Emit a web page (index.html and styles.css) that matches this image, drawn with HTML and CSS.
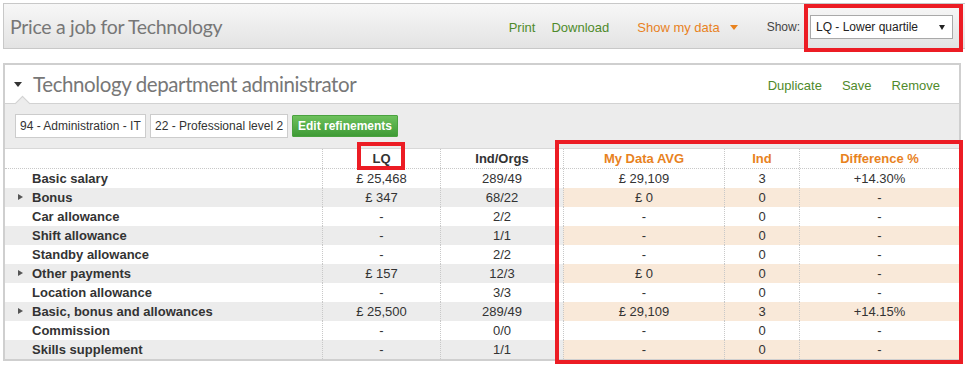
FILE: index.html
```html
<!DOCTYPE html>
<html>
<head>
<meta charset="utf-8">
<title>Price a job for Technology</title>
<link rel="stylesheet" href="styles.css">
</head>
<body>
<div class="topbar">
  <h1 class="page-title">Price a job for Technology</h1>
  <nav class="top-actions">
    <a class="link green print">Print</a>
    <a class="link green download">Download</a>
    <a class="link orange showdata">Show my data</a><span class="caret"></span>
    <span class="show-label">Show:</span>
    <div class="select"><span>LQ - Lower quartile</span><span class="sel-arrow"></span></div>
  </nav>
</div>

<section class="panel">
  <header class="panel-head">
    <span class="collapse-tri"></span>
    <h2 class="job-title">Technology department administrator</h2>
    <div class="panel-actions">
      <a class="link green">Duplicate</a>
      <a class="link green">Save</a>
      <a class="link green">Remove</a>
    </div>
  </header>
  <div class="refine">
    <div class="chip chip-a">94 - Administration - IT</div>
    <div class="chip chip-b">22 - Professional level 2</div>
    <button class="btn-edit">Edit refinements</button>
  </div>

  <div class="grid">
    <div class="row head">
      <div class="c lbl"></div>
      <div class="c">LQ</div>
      <div class="c">Ind/Orgs</div>
      <div class="c my">My Data AVG</div>
      <div class="c my">Ind</div>
      <div class="c my">Difference %</div>
    </div>
    <div class="row">
      <div class="c lbl">Basic salary</div>
      <div class="c">£ 25,468</div><div class="c">289/49</div>
      <div class="c my">£ 29,109</div><div class="c my">3</div><div class="c my">+14.30%</div>
    </div>
    <div class="row alt">
      <div class="c lbl"><span class="exp"></span>Bonus</div>
      <div class="c">£ 347</div><div class="c">68/22</div>
      <div class="c my">£ 0</div><div class="c my">0</div><div class="c my">-</div>
    </div>
    <div class="row">
      <div class="c lbl">Car allowance</div>
      <div class="c">-</div><div class="c">2/2</div>
      <div class="c my">-</div><div class="c my">0</div><div class="c my">-</div>
    </div>
    <div class="row alt">
      <div class="c lbl">Shift allowance</div>
      <div class="c">-</div><div class="c">1/1</div>
      <div class="c my">-</div><div class="c my">0</div><div class="c my">-</div>
    </div>
    <div class="row">
      <div class="c lbl">Standby allowance</div>
      <div class="c">-</div><div class="c">2/2</div>
      <div class="c my">-</div><div class="c my">0</div><div class="c my">-</div>
    </div>
    <div class="row alt">
      <div class="c lbl"><span class="exp"></span>Other payments</div>
      <div class="c">£ 157</div><div class="c">12/3</div>
      <div class="c my">£ 0</div><div class="c my">0</div><div class="c my">-</div>
    </div>
    <div class="row">
      <div class="c lbl">Location allowance</div>
      <div class="c">-</div><div class="c">3/3</div>
      <div class="c my">-</div><div class="c my">0</div><div class="c my">-</div>
    </div>
    <div class="row alt">
      <div class="c lbl"><span class="exp"></span>Basic, bonus and allowances</div>
      <div class="c">£ 25,500</div><div class="c">289/49</div>
      <div class="c my">£ 29,109</div><div class="c my">3</div><div class="c my">+14.15%</div>
    </div>
    <div class="row">
      <div class="c lbl">Commission</div>
      <div class="c">-</div><div class="c">0/0</div>
      <div class="c my">-</div><div class="c my">0</div><div class="c my">-</div>
    </div>
    <div class="row alt">
      <div class="c lbl">Skills supplement</div>
      <div class="c">-</div><div class="c">1/1</div>
      <div class="c my">-</div><div class="c my">0</div><div class="c my">-</div>
    </div>
  </div>
</section>

<div class="mark mark-select"></div>
<div class="mark mark-lq"></div>
<div class="mark mark-mydata"></div>
</body>
</html>
```

FILE: styles.css
```css
html, body {
  margin: 0;
  padding: 0;
}
body {
  position: relative;
  width: 965px;
  height: 366px;
  overflow: hidden;
  background: #ffffff;
  color: #333333;
  font-family: "Liberation Sans", Arial, sans-serif;
  font-size: 13px;
}

.link {
  cursor: pointer;
  text-decoration: none;
}
.green { color: #4f8a2b; }
.orange { color: #e8821e; }

/* ---------- top bar ---------- */
.topbar {
  display: flex;
  align-items: center;
  box-sizing: border-box;
  height: 46px;
  margin: 3px -20px 0 3px;
  padding: 0 31px 0 6px;
  border: 1px solid #c8c8c8;
  background: linear-gradient(#f7f7f7, #e3e3e3);
}
.page-title {
  margin: 0;
  font-family: Lato, "Open Sans", sans-serif;
  font-weight: 400;
  font-size: 19.5px;
  letter-spacing: -0.3px;
  color: #777777;
}
.top-actions {
  margin-left: auto;
  display: flex;
  align-items: center;
  padding-top: 2px;
  font-size: 13px;
}
.print { margin-right: 16px; }
.download { margin-right: 28px; }
.caret {
  width: 0;
  height: 0;
  margin-left: 10px;
  margin-top: 1px;
  border-left: 4px solid transparent;
  border-right: 4px solid transparent;
  border-top: 5px solid #e8821e;
}
.show-label {
  margin-left: 29px;
  font-size: 12px;
  color: #444444;
}
.select {
  display: flex;
  align-items: center;
  justify-content: space-between;
  box-sizing: border-box;
  width: 143px;
  height: 24px;
  margin-left: 10px;
  padding: 0 7px 0 5px;
  border: 1px solid #a9a9a9;
  background: #ffffff;
  font-size: 12px;
  color: #222222;
}
.sel-arrow {
  width: 0;
  height: 0;
  border-left: 3px solid transparent;
  border-right: 3px solid transparent;
  border-top: 5px solid #222222;
}

/* ---------- panel ---------- */
.panel {
  margin: 14px 4px 0 3px;
  border: 2px solid #cfcfcf;
  background: #ffffff;
}
.panel-head {
  display: flex;
  align-items: center;
  box-sizing: border-box;
  height: 39px;
  padding: 0 19px 0 9px;
  border-bottom: 1px solid #d2d2d2;
}
.collapse-tri {
  width: 0;
  height: 0;
  margin-top: 1px;
  border-left: 4px solid transparent;
  border-right: 4px solid transparent;
  border-top: 5px solid #333333;
}
.job-title {
  margin: 0 0 0 11px;
  font-family: Lato, "Open Sans", sans-serif;
  font-weight: 400;
  font-size: 20.5px;
  letter-spacing: -0.4px;
  color: #777777;
}
.panel-actions {
  margin-left: auto;
  display: flex;
  gap: 20px;
  font-size: 13px;
  padding-top: 2px;
}

.refine {
  position: relative;
  display: flex;
  align-items: center;
  gap: 4px;
  box-sizing: border-box;
  height: 44px;
  padding: 0 10px;
  background: #ececec;
}
.refine::before {
  content: "";
  position: absolute;
  left: 12px;
  top: -6px;
  width: 10px;
  height: 10px;
  background: #ececec;
  border-top: 1px solid #d2d2d2;
  border-left: 1px solid #d2d2d2;
  transform: rotate(45deg);
}
.chip {
  box-sizing: border-box;
  height: 24px;
  line-height: 22px;
  padding: 0 4px;
  border: 1px solid #cccccc;
  background: #ffffff;
  font-size: 12px;
  color: #333333;
  white-space: nowrap;
}
.chip-a { width: 131px; }
.chip-b { width: 138px; }
.btn-edit {
  box-sizing: border-box;
  width: 106px;
  height: 22px;
  padding: 0;
  border: 1px solid #4aa23f;
  border-radius: 1px;
  background: linear-gradient(#6dc15c, #3f9b36);
  color: #ffffff;
  font-family: "Liberation Sans", Arial, sans-serif;
  font-weight: 700;
  font-size: 12px;
}

/* ---------- grid ---------- */
.grid {
  border-top: 1px solid #d8d8d8;
}
.row {
  display: grid;
  grid-template-columns: 317px 118px 123px 161px 75px 160px;
  height: 19px;
}
.row.head {
  height: 20px;
  border-bottom: 1px dotted #c8c8c8;
  box-sizing: border-box;
  font-weight: 700;
}
.row.head .my {
  color: #e8821e;
}
.c {
  box-sizing: border-box;
  display: flex;
  align-items: center;
  justify-content: center;
  border-left: 1px dotted #c8c8c8;
  white-space: nowrap;
}
.c.lbl {
  justify-content: flex-start;
  border-left: none;
  padding-left: 27px;
  font-weight: 700;
  position: relative;
}
.row.alt .c {
  background: #ececec;
}
.row.alt .c.my {
  background: #f9e9d9;
}
.exp {
  position: absolute;
  left: 13px;
  top: 6px;
  width: 0;
  height: 0;
  border-top: 3.5px solid transparent;
  border-bottom: 3.5px solid transparent;
  border-left: 5px solid #555555;
}

/* ---------- annotation marks (overlays) ---------- */
.mark {
  position: absolute;
  box-sizing: border-box;
  border: 4px solid #ec1c24;
  pointer-events: none;
}
.mark-select {
  left: 804px;
  top: 4px;
  width: 159px;
  height: 48px;
}
.mark-lq {
  left: 357px;
  top: 142px;
  width: 48px;
  height: 28px;
}
.mark-mydata {
  left: 555px;
  top: 140px;
  width: 408px;
  height: 224px;
}
```
